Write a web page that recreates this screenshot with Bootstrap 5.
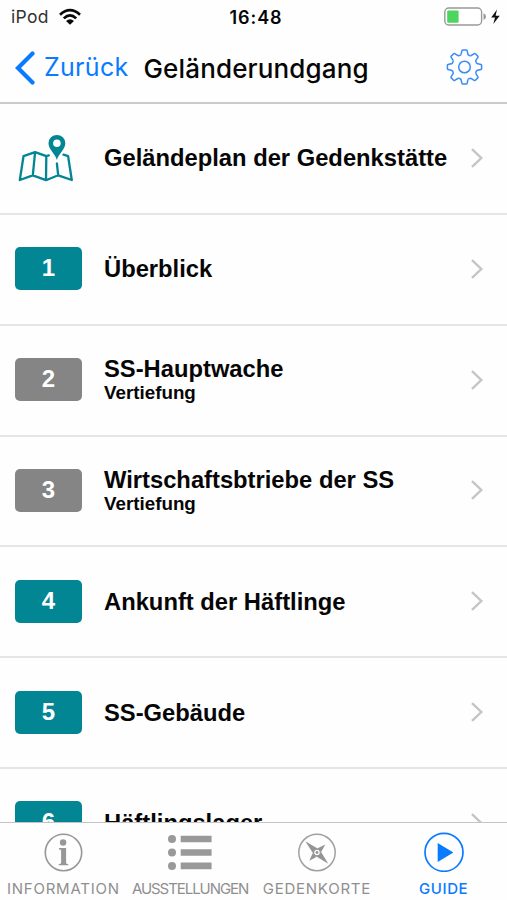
<!DOCTYPE html>
<html lang="de">
<head>
<meta charset="utf-8">
<meta name="viewport" content="width=device-width, initial-scale=1">
<title>Geländerundgang</title>
<link href="https://cdn.jsdelivr.net/npm/bootstrap@5.3.0/dist/css/bootstrap.min.css" rel="stylesheet">
<style>
  :root { --teal: #028694; --ios-blue: #0a7aff; }
  body { font-family: "Liberation Sans", Arial, sans-serif; color: #060606; background: #fefefe; }
  svg { display: block; flex: none; }
  .app { height: 900px; }
  .status { height: 34px; padding: 0 6px 0 11px; font-family: Inter, sans-serif; }
  .status > div { flex: 1 1 0; }
  .carrier { font-size: 17.5px; color: #333; letter-spacing: .3px; }
  .clock { font-size: 18px; font-weight: 600; letter-spacing: .9px; }
  .titlebar { height: 70px; padding: 1px 24px 2px 14px; border-bottom: 2px solid #cacaca; font-family: Inter, sans-serif; font-size: 25px; }
  .back { color: var(--ios-blue); letter-spacing: .3px; padding-top: 1px; }
  .heading { font-weight: 500; font-size: 26px; margin-left: 15px; letter-spacing: .15px; padding-top: 1px; }
  .entries { flex: 1 1 0; min-height: 0; }
  .entry { height: 110.85px; flex: none; padding: 0 23px 1px 15px; border-bottom: 2px solid #e5e5e5; color: inherit; text-decoration: none; }
  .lead-icon { width: 67px; margin-right: 22px; flex: none; }
  .num { height: 43px; border-radius: 5px; background: var(--teal); color: #fff; font-weight: 700; font-size: 24px; line-height: 41px; text-align: center; }
  .num.deep { background: #858585; }
  .name { font-weight: 700; font-size: 23.75px; line-height: 26px; white-space: nowrap; padding-top: 1px; }
  .sub { font-weight: 700; font-size: 18.8px; line-height: 22px; }
  .tabs { height: 78px; border-top: 1px solid #c4c4c4; font-family: Inter, sans-serif; font-size: 15px; color: #8f8f8f; background: #fefefe; }
  .tab { width: 126.75px; flex: none; padding-top: 9px; white-space: nowrap; }
  .tab span { line-height: 18px; margin-top: 8px; }
  .t1 { letter-spacing: .75px; } .t2 { letter-spacing: -1.05px; } .t3 { letter-spacing: .75px; }
  .tab.on { color: var(--ios-blue); font-weight: 500; letter-spacing: .6px; }
</style>
<script src="https://cdn.jsdelivr.net/npm/bootstrap@5.3.0/dist/js/bootstrap.bundle.min.js"></script>
</head>
<body>
<svg width="0" height="0" class="position-absolute" aria-hidden="true">
  <symbol id="chev" viewBox="0 0 14 22"><path d="M2 2.2 11.3 11 2 19.8" fill="none" stroke="#c5c5c5" stroke-width="2.4"/></symbol>
  <path id="tooth" d="M-3.5-12.4-2.6-16.4Q-2.4-17.1-1.7-17.1L1.7-17.1Q2.4-17.1 2.6-16.4L3.5-12.4Q5.2-11 6.3-11.25"/>
</svg>
<div class="app d-flex flex-column overflow-hidden">
  <header>
    <div class="status d-flex align-items-center">
      <div class="d-flex align-items-center">
        <span class="carrier">iPod</span>
        <svg class="ms-2" width="25" height="18" viewBox="-1 0 25 18" fill="none" stroke="#080808" stroke-width="2.7"><path d="M2 6.8Q12-2.4 22 6.8M5.8 10.4Q12 4.4 18.2 10.4"/><path d="M8 12.9Q12 9.6 16 12.9L12 16.8Z" fill="#080808" stroke="none"/></svg>
      </div>
      <span class="clock">16:48</span>
      <div class="d-flex align-items-center justify-content-end">
        <svg width="57" height="20" viewBox="0 0 57 20"><rect x=".8" y="1" width="36.8" height="17" rx="4" fill="#fff" stroke="#999" stroke-width="1.4"/><rect x="3.2" y="3.4" width="11.4" height="12.4" rx="1" fill="#4cd55f"/><path d="M39.5 6.3Q42 7 42 9.5T39.5 12.7Z" fill="#999"/><path d="M53 2.5 47.2 10.6H51L49.3 17 55.7 8.8H51.6Z" fill="#111"/></svg>
      </div>
    </div>
    <div class="titlebar d-flex align-items-center">
      <svg width="22" height="34" viewBox="0 0 22 34"><path d="M18.5 2.5 4 17 18.5 31.5" fill="none" stroke="#0a7aff" stroke-width="4.2" stroke-linecap="round"/></svg>
      <span class="back ms-2">Zurück</span>
      <span class="heading">Geländerundgang</span>
      <svg class="ms-auto" width="37" height="37" viewBox="-18.5 -18 37 37" fill="none" stroke="#3b8cf5" stroke-width="1.5"><use href="#tooth"/><use href="#tooth" transform="rotate(45)"/><use href="#tooth" transform="rotate(90)"/><use href="#tooth" transform="rotate(135)"/><use href="#tooth" transform="rotate(180)"/><use href="#tooth" transform="rotate(225)"/><use href="#tooth" transform="rotate(270)"/><use href="#tooth" transform="rotate(315)"/><circle r="5.8"/></svg>
    </div>
  </header>

  <main class="entries overflow-hidden d-flex flex-column">
    <a class="entry d-flex align-items-center">
      <div class="lead-icon"><svg width="60" height="50" viewBox="-.5 -2 60 50"><g fill="none" stroke="#028694" stroke-width="2.3" stroke-linejoin="round" stroke-linecap="round"><path d="M33.3 20.4 30.8 21.2 19.6 17.1 8 21.2 4.3 45 17.3 40.3 30.5 45.2 42.7 40.3 56.3 45 52.6 21.2 48 19.6M19.6 17.1 17.3 40.3M30.8 21.2 30.5 45.2M41.4 28.5 42.7 40.3"/></g><path d="M41.4 25C39.5 18.5 33 14.5 33 8.3A8.4 8.4 0 0 1 49.8 8.3C49.8 14.5 43.3 18.5 41.4 25ZM41.4 4.5A3.8 3.8 0 1 0 41.4 12.1 3.8 3.8 0 0 0 41.4 4.5Z" fill="#028694" fill-rule="evenodd"/></svg></div>
      <div class="name">Geländeplan der Gedenkstätte</div>
      <svg class="ms-auto" width="14" height="22"><use href="#chev"/></svg>
    </a>
    <a class="entry d-flex align-items-center"><div class="lead-icon num">1</div><div class="name">Überblick</div><svg class="ms-auto" width="14" height="22"><use href="#chev"/></svg></a>
    <a class="entry d-flex align-items-center"><div class="lead-icon num deep">2</div><div><div class="name">SS-Hauptwache</div><div class="sub">Vertiefung</div></div><svg class="ms-auto" width="14" height="22"><use href="#chev"/></svg></a>
    <a class="entry d-flex align-items-center"><div class="lead-icon num deep">3</div><div><div class="name">Wirtschaftsbtriebe der SS</div><div class="sub">Vertiefung</div></div><svg class="ms-auto" width="14" height="22"><use href="#chev"/></svg></a>
    <a class="entry d-flex align-items-center"><div class="lead-icon num">4</div><div class="name">Ankunft der Häftlinge</div><svg class="ms-auto" width="14" height="22"><use href="#chev"/></svg></a>
    <a class="entry d-flex align-items-center"><div class="lead-icon num">5</div><div class="name">SS-Gebäude</div><svg class="ms-auto" width="14" height="22"><use href="#chev"/></svg></a>
    <a class="entry d-flex align-items-center"><div class="lead-icon num">6</div><div class="name">Häftlingslager</div><svg class="ms-auto" width="14" height="22"><use href="#chev"/></svg></a>
  </main>

  <nav class="tabs d-flex">
    <div class="tab d-flex flex-column align-items-center">
      <svg width="40" height="40" viewBox="-.5 -.5 40 40"><circle cx="20" cy="20" r="18.2" fill="none" stroke="#979797" stroke-width="1.6"/><circle cx="19.6" cy="10" r="3.2" fill="#979797"/><path d="M15.4 15.6H22.6V30.5Q22.6 31.6 24.8 31.8V32.8H15.2V31.8Q17.6 31.6 17.6 30.5V18.2Q17.6 16.9 15.4 16.7Z" fill="#979797"/></svg>
      <span class="t1">INFORMATION</span>
    </div>
    <div class="tab d-flex flex-column align-items-center">
      <svg width="44" height="40" viewBox="0 -.3 44 40" fill="#999"><circle cx="4" cy="6.7" r="4"/><circle cx="4" cy="20.2" r="4"/><circle cx="4" cy="33.6" r="4"/><path d="M12.7 3.4H43.6V10H12.7ZM12.7 16.9H43.6V23.5H12.7ZM12.7 30.3H43.6V36.9H12.7Z"/></svg>
      <span class="t2">AUSSTELLUNGEN</span>
    </div>
    <div class="tab d-flex flex-column align-items-center">
      <svg width="40" height="40" viewBox="0 -.5 40 40"><circle cx="20" cy="20" r="18.2" fill="none" stroke="#a0a0a0" stroke-width="1.5"/><g fill="#949494"><path d="M8.3 8.8 22.7 17.3 31.3 31.3 17.3 22.7Z"/><path d="M28.3 12 24.3 19.3 20.6 15.7ZM12.3 28.2 15.7 20.8 19.4 24.4Z"/></g><circle cx="20" cy="20" r="3.3" fill="#fefefe" stroke="#949494" stroke-width="1.1"/><circle cx="20" cy="20" r="1.4" fill="#949494"/></svg>
      <span class="t3">GEDENKORTE</span>
    </div>
    <div class="tab on d-flex flex-column align-items-center">
      <svg width="40" height="40" viewBox="0 -.3 40 40"><circle cx="20" cy="20" r="19" fill="none" stroke="#0a7aff" stroke-width="1.7"/><path d="M13.7 10.8V29.8L29.4 20.3Z" fill="#0a7aff"/></svg>
      <span>GUIDE</span>
    </div>
  </nav>
</div>
</body>
</html>
